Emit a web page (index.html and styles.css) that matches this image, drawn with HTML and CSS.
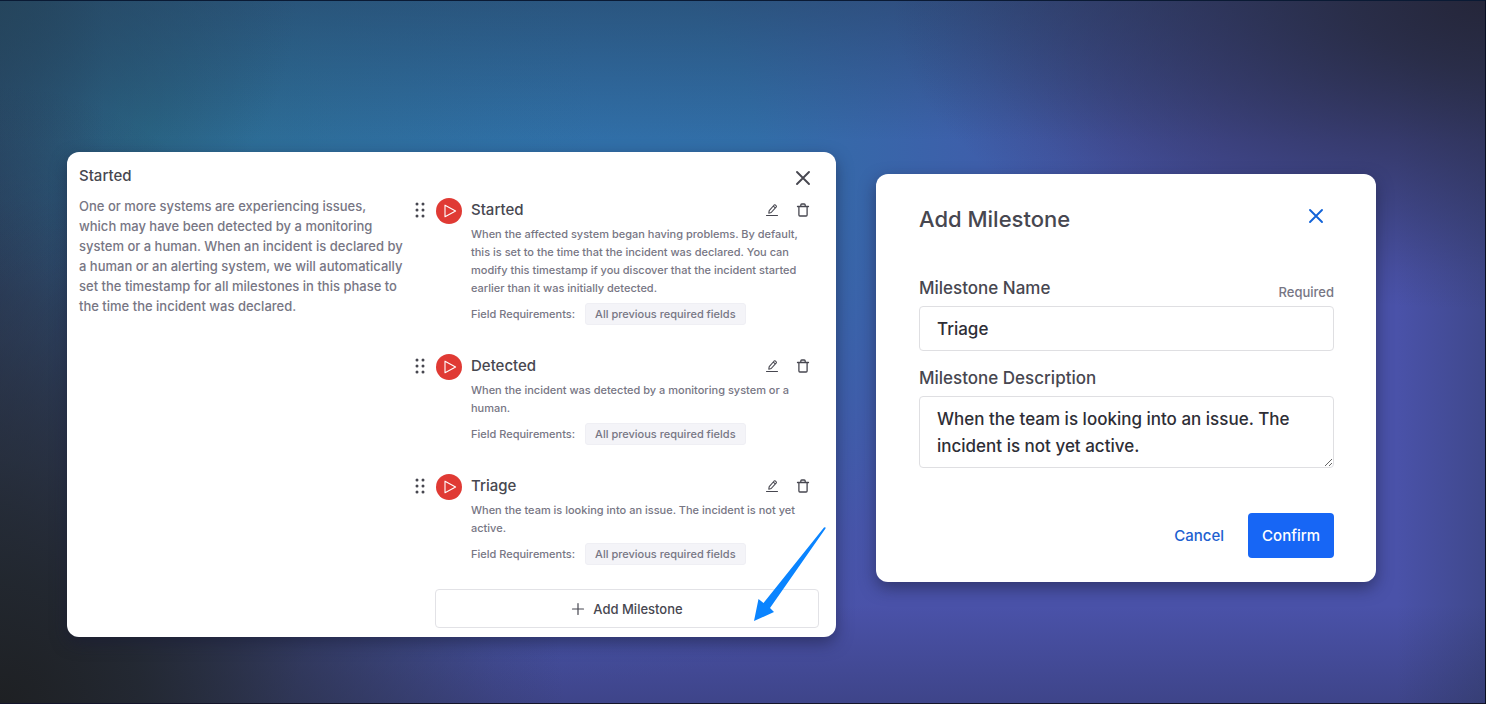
FILE: index.html
```
<!DOCTYPE html>
<html lang="en">
<head>
	<meta charset="UTF-8">
	<meta name="viewport" content="width=device-width, initial-scale=1">
	<title>Add Milestone</title>
	<link rel="stylesheet" href="styles.css">
</head>
<body>
	<!-- shared icons -->
	<svg class="sprite" aria-hidden="true">
		<symbol id="icon-drag" viewBox="0 0 12 18">
			<g fill="currentColor">
				<circle cx="2" cy="3" r="1.5"/><circle cx="8" cy="3" r="1.5"/>
				<circle cx="2" cy="9" r="1.5"/><circle cx="8" cy="9" r="1.5"/>
				<circle cx="2" cy="15" r="1.5"/><circle cx="8" cy="15" r="1.5"/>
			</g>
		</symbol>
		<symbol id="icon-play" viewBox="0 0 26 26">
			<circle cx="13" cy="13" r="13" fill="#e03a34"/>
			<path d="M9 7.2v11.6L19.6 13z" fill="none" stroke="#fff" stroke-width="1.1" stroke-linejoin="round"/>
		</symbol>
		<symbol id="icon-edit" viewBox="0 0 14 14">
			<path d="M1.5 12.5h11M3.8 10.2l.4-2.5 5-5.7q.5-.5 1-.1l1 .9q.5.5.1 1L6.2 9.5zM8.3 3.1l2 1.8" fill="none" stroke="currentColor" stroke-width="1.1" stroke-linejoin="round" stroke-linecap="round"/>
		</symbol>
		<symbol id="icon-trash" viewBox="0 0 14 14">
			<path d="M1.5 3.5h11M2.9 3.5v8.5q0 1 1 1h6.2q1 0 1-1V3.5M4.8 3.3V2q0-1 1-1h2.4q1 0 1 1v1.3" fill="none" stroke="currentColor" stroke-width="1.3" stroke-linejoin="round" stroke-linecap="round"/>
		</symbol>
		<symbol id="icon-close" viewBox="0 0 16 16">
			<path d="M2 2l12 12M14 2L2 14" fill="none" stroke="currentColor" stroke-width="1.9" stroke-linecap="round"/>
		</symbol>
		<symbol id="icon-plus" viewBox="0 0 14 14">
			<path d="M7 1.5v11M1.5 7h11" fill="none" stroke="currentColor" stroke-width="1.2" stroke-linecap="round"/>
		</symbol>
	</svg>

	<main class="stage">
		<section class="card phase">
			<div class="phase-info">
				<h2>Started</h2>
				<p>One or more systems are experiencing issues, which may have been detected by a monitoring system or a human. When an incident is declared by a human or an alerting system, we will automatically set the timestamp for all milestones in this phase to the time the incident was declared.</p>
			</div>
			<div class="phase-list">
				<div class="phase-top">
					<button type="button" class="icon-btn close" aria-label="Close"><svg><use href="#icon-close"/></svg></button>
				</div>
				<ul class="milestones">
					<li class="milestone">
						<svg class="drag"><use href="#icon-drag"/></svg>
						<svg class="play"><use href="#icon-play"/></svg>
						<div class="milestone-body">
							<div class="milestone-head">
								<h3>Started</h3>
								<button type="button" class="icon-btn" aria-label="Edit"><svg><use href="#icon-edit"/></svg></button>
								<button type="button" class="icon-btn" aria-label="Delete"><svg><use href="#icon-trash"/></svg></button>
							</div>
							<p>When the affected system began having problems. By default, this is set to the time that the incident was declared. You can modify this timestamp if you discover that the incident started earlier than it was initially detected.</p>
							<div class="requirements"><span>Field Requirements:</span><span class="chip">All previous required fields</span></div>
						</div>
					</li>
					<li class="milestone">
						<svg class="drag"><use href="#icon-drag"/></svg>
						<svg class="play"><use href="#icon-play"/></svg>
						<div class="milestone-body">
							<div class="milestone-head">
								<h3>Detected</h3>
								<button type="button" class="icon-btn" aria-label="Edit"><svg><use href="#icon-edit"/></svg></button>
								<button type="button" class="icon-btn" aria-label="Delete"><svg><use href="#icon-trash"/></svg></button>
							</div>
							<p>When the incident was detected by a monitoring system or a human.</p>
							<div class="requirements"><span>Field Requirements:</span><span class="chip">All previous required fields</span></div>
						</div>
					</li>
					<li class="milestone">
						<svg class="drag"><use href="#icon-drag"/></svg>
						<svg class="play"><use href="#icon-play"/></svg>
						<div class="milestone-body">
							<div class="milestone-head">
								<h3>Triage</h3>
								<button type="button" class="icon-btn" aria-label="Edit"><svg><use href="#icon-edit"/></svg></button>
								<button type="button" class="icon-btn" aria-label="Delete"><svg><use href="#icon-trash"/></svg></button>
							</div>
							<p>When the team is looking into an issue. The incident is not yet active.</p>
							<div class="requirements"><span>Field Requirements:</span><span class="chip">All previous required fields</span></div>
						</div>
					</li>
				</ul>
				<button type="button" class="add-btn"><svg><use href="#icon-plus"/></svg>Add Milestone</button>
			</div>
			<!-- pointer over the add button -->
			<svg class="arrow" viewBox="0 0 74 96" aria-hidden="true">
				<path d="M71 1.5Q73 .5 72.5 2.5L17 82L21 86L1 95L5.5 73L10.5 77z" fill="#0a84ff"/>
			</svg>
		</section>

		<form class="card dialog">
			<div class="dialog-head">
				<h1>Add Milestone</h1>
				<button type="button" class="icon-btn close" aria-label="Close"><svg><use href="#icon-close"/></svg></button>
			</div>
			<div class="field">
				<div class="field-head">
					<label for="name">Milestone Name</label>
					<span class="required">Required</span>
				</div>
				<input type="text" id="name" value="Triage">
			</div>
			<div class="field">
				<div class="field-head">
					<label for="description">Milestone Description</label>
				</div>
				<textarea id="description" rows="2">When the team is looking into an issue. The incident is not yet active.</textarea>
			</div>
			<div class="dialog-actions">
				<button type="button" class="cancel">Cancel</button>
				<button type="button" class="confirm">Confirm</button>
			</div>
		</form>
	</main>
</body>
</html>
```
FILE: styles.css
```
*{
	box-sizing:border-box;
}
body{
	margin:0;
	font-family:Inter, "Liberation Sans", sans-serif;
	font-weight:500;
	color:#474750;
}
h1, h2, h3, p, ul{
	margin:0;
	padding:0;
	font-weight:500;
}
ul{
	list-style:none;
}
button, input, textarea{
	font:inherit;
	color:inherit;
}
.sprite{
	display:none;
}

.stage{
	min-height:100vh;
	display:grid;
	grid-template-columns:769fr 500fr;
	align-items:start;
	gap:40px;
	padding:152px 110px 67px 67px;
	box-shadow:inset -1px 0 #0a1024, inset 0 1px #0a1a34, inset 0 -1px #14152a;
	background:
		radial-gradient(ellipse 40% 44% at 100% 0%, #25263a 0%, #27293fdd 22%, #2a2c48aa 45%, #2c305066 70%, #2c305022 88%, #2c305000 100%),
		radial-gradient(ellipse 38% 72% at 0% 100%, #1e2023 0%, #21262ce6 25%, #262d38b0 48%, #2a334466 72%, #2a334422 88%, #2a334400 100%),
		radial-gradient(ellipse 22% 60% at 0% 72%, #242d3acc 0%, #242d3a77 50%, #242d3a00 100%),
		radial-gradient(ellipse 20% 40% at 0% 0%, #24465ccc 0%, #24465c66 50%, #24465c00 100%),
		linear-gradient(to right, #222d3c66, #222d3c00 7%),
		linear-gradient(to left, #222d3c44, #222d3c00 6%),
		linear-gradient(to top, #26294a55, #26294a00 14%),
		linear-gradient(to bottom, #24405c88, #24405c00 20%),
		radial-gradient(ellipse 30% 60% at 10% 18%, #2b6c8f 0%, #2b6c8f77 45%, #2b6c8f22 80%, #2b6c8f00 100%),
		radial-gradient(ellipse 48% 78% at 34% 20%, #3070a8 0%, #3070a8ee 35%, #336bab99 62%, #3a62ab33 86%, #3a62ab00 100%),
		#4a52a9;
}
.card{
	background:#fff;
	border-radius:12px;
	box-shadow:0 6px 16px rgba(24, 26, 54, .5);
}

.phase{
	position:relative;
	display:grid;
	grid-template-columns:328fr 404fr;
	gap:8px;
	padding:12px 17px 9px 12px;
}
.phase-info{
	padding-right:2px;
}
.phase-info h2{
	font-size:15px;
	line-height:24px;
	margin-bottom:8px;
}
.phase-info p{
	font-size:13px;
	line-height:20px;
	color:#777684;
}
.phase-top{
	display:flex;
	justify-content:flex-end;
	padding:4px 8px 0 0;
	height:33px;
}
.icon-btn{
	display:flex;
	padding:0;
	border:0;
	background:none;
	cursor:pointer;
}
.icon-btn svg{
	width:14px;
	height:14px;
}
.close{
	height:20px;
	align-items:center;
}
.close svg{
	width:16px;
	height:16px;
}
.milestones{
	display:grid;
	gap:28px;
}
.milestone{
	display:flex;
	gap:9px;
}
.drag{
	flex:none;
	width:12px;
	height:18px;
	margin-top:4px;
}
.play{
	flex:none;
	width:26px;
	height:26px;
	margin-top:1px;
}
.milestone-body{
	flex:1;
}
.milestone-head{
	display:flex;
	align-items:center;
	gap:17px;
	padding-right:9px;
	margin-bottom:2px;
}
.milestone-head h3{
	flex:1;
	font-size:15px;
	line-height:26px;
}
.milestone-body p{
	font-size:11px;
	line-height:18px;
	color:#777684;
}
.requirements{
	display:flex;
	align-items:center;
	gap:10px;
	margin-top:6px;
	font-size:11px;
	line-height:20px;
	color:#777684;
}
.chip{
	padding:0 9px;
	border:1px solid #efeff4;
	border-radius:3px;
	background:#f4f4f8;
}
.add-btn{
	display:flex;
	align-items:center;
	justify-content:center;
	gap:8px;
	width:calc(100% - 20px);
	height:39px;
	margin:24px 0 0 20px;
	border:1px solid #e2e2e6;
	border-radius:4px;
	background:#fff;
	font-size:13px;
}
.add-btn svg{
	width:14px;
	height:14px;
}
.arrow{
	position:absolute;
	right:9px;
	bottom:15px;
	width:74px;
	height:96px;
}

.dialog{
	margin-top:22px;
	padding:29px 42px 24px 43px;
}
.dialog-head{
	display:flex;
	justify-content:space-between;
	align-items:flex-start;
	padding-right:10px;
	margin-bottom:41px;
}
.dialog-head h1{
	font-size:22px;
	line-height:32px;
}
.dialog-head .close{
	margin-top:3px;
	color:#1263d8;
}
.field{
	margin-bottom:15px;
}
.field-head{
	display:flex;
	justify-content:space-between;
	align-items:flex-end;
	margin-bottom:6px;
	font-size:17px;
	line-height:24px;
}
.required{
	font-size:13px;
	line-height:16px;
	color:#777684;
}
.field input, .field textarea{
	display:block;
	width:100%;
	padding:9px 17px 7px;
	border:1px solid #dfdfe2;
	border-radius:4px;
	background:#fff;
	color:#2e2e36;
	font-size:17px;
	line-height:27px;
}
.dialog-actions{
	display:flex;
	justify-content:flex-end;
	gap:10px;
	margin-top:45px;
}
.dialog-actions button{
	height:45px;
	padding:0 14px;
	border:0;
	border-radius:4px;
	background:none;
	font-size:15px;
}
.dialog-actions .cancel{
	color:#2060d0;
}
.dialog-actions .confirm{
	background:#1766f5;
	color:#fff;
}
```
